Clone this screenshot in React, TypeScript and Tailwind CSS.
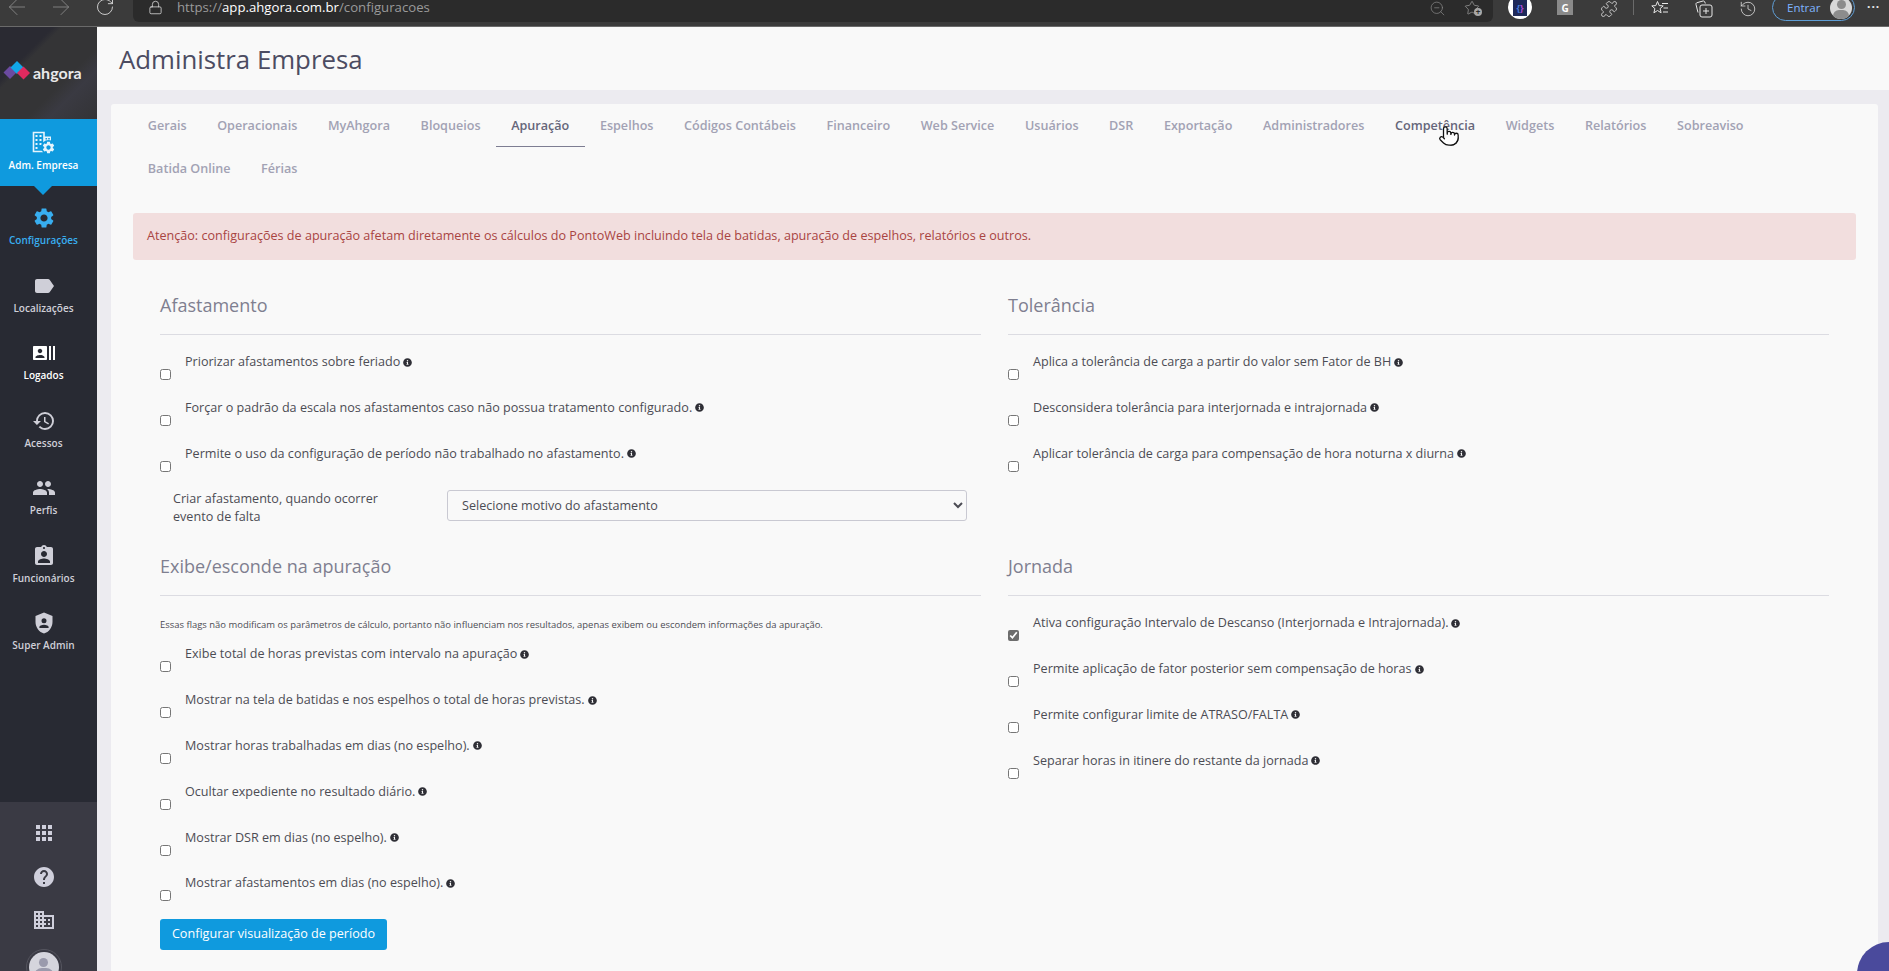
import { ArrowLeft, ArrowRight, History, Lock, Pointer, Puzzle, RotateCw, Star, ZoomOut } from "lucide-react";
import { FaInfoCircle } from "react-icons/fa";
import { MdApps, MdAssignmentInd, MdDomain, MdHelp, MdHistory, MdLabel, MdPeople, MdRecentActors, MdSettings } from "react-icons/md";
import type { ReactNode } from "react";

const GEAR =
  "M19.14 12.94c.04-.3.06-.61.06-.94 0-.32-.02-.64-.07-.94l2.03-1.58a.49.49 0 0 0 .12-.61l-1.92-3.32a.488.488 0 0 0-.59-.22l-2.39.96c-.5-.38-1.03-.7-1.62-.94l-.36-2.54a.484.484 0 0 0-.48-.41h-3.84c-.24 0-.43.17-.47.41l-.36 2.54c-.59.24-1.13.57-1.62.94l-2.39-.96c-.22-.08-.47 0-.59.22L2.74 8.87c-.12.21-.08.47.12.61l2.03 1.58c-.05.3-.09.63-.09.94s.02.64.07.94l-2.03 1.58a.49.49 0 0 0-.12.61l1.92 3.32c.12.22.37.29.59.22l2.39-.96c.5.38 1.03.7 1.62.94l.36 2.54c.05.24.24.41.48.41h3.84c.24 0 .44-.17.47-.41l.36-2.54c.59-.24 1.13-.56 1.62-.94l2.39.96c.22.08.47 0 .59-.22l1.92-3.32c.12-.22.07-.47-.12-.61l-2.01-1.58zM12 15.6c-1.98 0-3.6-1.62-3.6-3.6s1.62-3.6 3.6-3.6 3.6 1.62 3.6 3.6-1.62 3.6-3.6 3.6z";

function CompanyGearIcon() {
  return (
    <svg width="24" height="24" viewBox="0 0 24 24" className="text-[#e6f4fc]">
      <path fill="none" stroke="currentColor" strokeWidth="1.6" d="M1.5 1.5h10.5v19H1.5z" />
      <path fill="currentColor" d="M12 5.5h7v5h-7zM3.500 4h2v2h-2zM7.500 4h2v2h-2zM3.500 8h2v2h-2zM7.500 8h2v2h-2zM3.500 12h2v2h-2zM7.500 12h2v2h-2zM3.500 16h2v2h-2z" />
      <path fill="#0f9ade" d="M13.500 7h1.600v1.600h-1.600zM16.200 7h1.600v1.600h-1.600z" />
      <circle cx="16.500" cy="16.500" r="7.500" fill="#0f9ade" />
      <path fill="currentColor" transform="translate(9.300 9.300) scale(0.6)" d={GEAR} />
    </svg>
  );
}

function ShieldUserIcon() {
  return (
    <svg width="24" height="24" viewBox="0 0 24 24">
      <path
        fill="currentColor"
        fillRule="evenodd"
        d="M12 1.500 3.500 5v6c0 5.300 3.600 10.200 8.500 11.500 4.900-1.300 8.500-6.200 8.500-11.500V5zM12 7.200a2.500 2.500 0 1 1 0 5 2.500 2.500 0 0 1 0-5zm0 6.600c2.400 0 4.600 1 4.600 2.200v.9H7.400V16c0-1.200 2.200-2.200 4.600-2.200z"
      />
    </svg>
  );
}

function FavoritesIcon() {
  return (
    <svg width="18" height="18" viewBox="0 0 18 18" fill="none" stroke="#e8e8e8" strokeWidth="1">
      <path d="M6.500 1.500 8.200 5.600l4 .3-3.100 2.700 1 4.200-3.600-2.300-3.600 2.300 1-4.200L.8 5.900l4-.3z" />
      <path d="M11 3.500h6M12.500 8h4.500M12 12h5" />
    </svg>
  );
}

function CollectionsIcon() {
  return (
    <svg width="18" height="18" viewBox="0 0 18 18" fill="none" stroke="#e8e8e8" strokeWidth="1">
      <path d="M3 12.500 1 4.500c-.2-.9.2-1.600 1-1.800L8 1c.8-.2 1.500.2 1.800 1l.5 1.500" />
      <rect x="5" y="5" width="12" height="12" rx="2" />
      <path d="M11 8v6M8 11h6" />
    </svg>
  );
}

function NavItem({ icon, label, tone }: { icon: ReactNode; label: string; tone: string }) {
  return (
    <div className={`flex h-[67.5px] flex-col items-center pt-3 ${tone}`}>
      <div className="flex h-6 items-center justify-center">{icon}</div>
      <span className="mt-[3px] text-[10px] leading-[14px] font-semibold whitespace-nowrap">{label}</span>
    </div>
  );
}

function Sidebar() {
  return (
    <aside className="flex w-[97px] shrink-0 flex-col bg-[#282a33]">
      <div className="flex h-[92px] shrink-0 items-center pb-[1px] pl-[3px] bg-[linear-gradient(135deg,#2a2a32_0%,#2a2a32_28%,#343436_33%,#343436_62%,#3a3a42_74%,#333336_100%)]">
        <svg width="28" height="24" viewBox="0 0 28 24">
          <path fill="#6b4aa0" d="M7 5l6.500 6.500L7 18 .5 11.500z" />
          <path fill="#11a7e8" d="M14 0l6.500 6.500L14 13 7.500 6.500z" />
          <path fill="#e02a5f" d="M20.500 5.500l6.500 6.500-6.500 6.500L14 12z" />
        </svg>
        <span className="ml-[2px] font-['Lato',sans-serif] text-[16px] leading-none font-bold text-[#e8e8ea]">ahgora</span>
      </div>

      <div className="relative h-[67px] shrink-0 bg-[#0f9ade] pr-[10px] text-white">
        <div className="flex flex-col items-center pt-3">
          <div className="flex h-6 items-center justify-center"><CompanyGearIcon /></div>
          <span className="mt-[3px] text-[10px] leading-[14px] font-semibold whitespace-nowrap">Adm. Empresa</span>
        </div>
        <div className="absolute top-full left-[34px] h-0 w-0 border-x-[9px] border-t-[9px] border-x-transparent border-t-[#0f9ade]" />
      </div>

      <div className="mt-2 pr-[10px]">
        <NavItem icon={<MdSettings size={24} />} label="Configurações" tone="text-[#38aef0]" />
        <NavItem icon={<MdLabel size={24} />} label="Localizações" tone="text-[#cfcfd8]" />
        <NavItem icon={<MdRecentActors size={24} />} label="Logados" tone="text-white" />
        <NavItem icon={<MdHistory size={24} />} label="Acessos" tone="text-[#cfcfd8]" />
        <NavItem icon={<MdPeople size={24} />} label="Perfis" tone="text-[#cfcfd8]" />
        <NavItem icon={<MdAssignmentInd size={24} />} label="Funcionários" tone="text-[#cfcfd8]" />
        <NavItem icon={<ShieldUserIcon />} label="Super Admin" tone="text-[#cfcfd8]" />
      </div>

      <div className="mt-auto flex h-[169px] shrink-0 flex-col items-center gap-[19.500px] overflow-hidden bg-[#3a3a44] pt-[19px] pr-[10px] text-[#cfcfdc]">
        <MdApps size={24} className="shrink-0" />
        <MdHelp size={24} className="shrink-0" />
        <MdDomain size={24} className="shrink-0" />
        <div className="-mt-[3px] flex h-9 w-9 shrink-0 items-center justify-center rounded-full border border-[#55555f]">
          <div className="flex h-[30px] w-[30px] flex-col items-center overflow-hidden rounded-full bg-[#d5d5dd] pt-[6px]">
            <div className="h-[9px] w-[9px] shrink-0 rounded-full bg-[#9a9aac]" />
            <div className="mt-[1px] h-4 w-5 shrink-0 rounded-full bg-[#9a9aac]" />
          </div>
        </div>
      </div>
    </aside>
  );
}

function BrowserBar() {
  return (
    <div className="flex h-[27px] shrink-0 items-start border-b border-[#6a6a6a] bg-[#3b3b3b]">
      <ArrowLeft size={26} strokeWidth={0.8} className="-mt-[6px] ml-[4px] shrink-0 text-[#8a8a8a]" />
      <ArrowRight size={26} strokeWidth={0.8} className="-mt-[6px] ml-[18px] shrink-0 text-[#8a8a8a]" />
      <RotateCw size={20} strokeWidth={1} className="-mt-[3px] ml-[21px] shrink-0 text-[#e4e4e4]" />
      <div className="ml-[18px] flex h-[22px] w-[1360px] shrink-0 items-start rounded-br-md rounded-bl-md bg-[#2b2b2b] pr-[11px] pl-[15px]">
        <Lock size={15} strokeWidth={1.2} className="text-[#e4e4e4]" />
        <span className="ml-[14px] text-[13.2px] leading-[15px] whitespace-nowrap text-[#9a9a9a]">
          https://<span className="text-white">app.ahgora.com.br</span>/configuracoes
        </span>
        <ZoomOut size={17} strokeWidth={1} className="ml-auto text-[#8a8a8a]" />
        <span className="relative ml-[18px] h-[17px] w-[18px]">
          <Star size={16} strokeWidth={1} className="text-[#a8a8a8]" />
          <span className="absolute right-0 bottom-[1px] flex h-[8px] w-[8px] items-center justify-center rounded-full bg-[#a8a8a8] text-[8px] leading-none font-bold text-[#2b2b2b]">+</span>
        </span>
      </div>
      <div className="-mt-[5px] ml-[15px] flex h-6 w-6 shrink-0 items-center justify-center rounded-full bg-white">
        <div className="flex h-[17px] w-[14px] items-center justify-center bg-[#1f2a5a] text-[9px] leading-none font-bold">
          <span className="text-[#4a7fe0]">{"{"}</span>
          <span className="text-[#b24ad8]">{"}"}</span>
        </div>
      </div>
      <div className="ml-[25px] flex h-[15px] w-4 items-center justify-center bg-[#8a8a8a] text-[10px] leading-none font-bold text-white">G</div>
      <Puzzle size={18} strokeWidth={1} className="ml-[27px] text-[#e8e8e8]" />
      <div className="ml-[15px] h-[15px] w-px bg-[#6a6a6a]" />
      <div className="ml-[17px]"><FavoritesIcon /></div>
      <div className="ml-[26px]"><CollectionsIcon /></div>
      <History size={18} strokeWidth={1} className="ml-[26px] text-[#e8e8e8]" />
      <div className="-mt-[6px] ml-[15px] flex h-[27px] w-[83px] shrink-0 items-center rounded-full border border-[#5f9ed6] pr-[2px] pl-[14px]">
        <span className="text-[11.5px] text-[#7fb4ff]">Entrar</span>
        <div className="ml-auto flex h-[22px] w-[22px] flex-col items-center overflow-hidden rounded-full bg-[#d8d8d8] pt-[3px]">
          <div className="h-[9px] w-[9px] shrink-0 rounded-full bg-[#8c8c8c]" />
          <div className="mt-[1px] h-3 w-4 shrink-0 rounded-full bg-[#8c8c8c]" />
        </div>
      </div>
      <span className="ml-[12px] text-[12px] leading-[14px] font-bold tracking-[1px] text-[#e8e8e8]">···</span>
    </div>
  );
}

const TABS = [
  "Gerais",
  "Operacionais",
  "MyAhgora",
  "Bloqueios",
  "Apuração",
  "Espelhos",
  "Códigos Contábeis",
  "Financeiro",
  "Web Service",
  "Usuários",
  "DSR",
  "Exportação",
  "Administradores",
  "Competência",
  "Widgets",
  "Relatórios",
  "Sobreaviso",
  "Batida Online",
  "Férias",
];

function Tab({ label }: { label: string }) {
  const tone =
    label === "Apuração"
      ? "border-[#7d7d92] font-semibold text-[#66667a]"
      : label === "Competência"
        ? "border-transparent font-semibold text-[#66667a]"
        : "border-transparent font-semibold text-[#a2a2b4]";
  return (
    <div className={`flex h-[43px] items-center border-b px-[15.3px] pt-[2px] text-[12.6px] whitespace-nowrap ${tone}`}>
      {label}
    </div>
  );
}

function SectionTitle({ children }: { children: ReactNode }) {
  return (
    <div className="flex h-[42px] items-start border-b border-[#dcdce2]">
      <h3 className="text-[18px] leading-6 font-normal text-[#7f7f90]">{children}</h3>
    </div>
  );
}

function CheckRow({ label, checked }: { label: string; checked?: boolean }) {
  return (
    <div className="flex h-[45.800px] items-start">
      <input
        type="checkbox"
        defaultChecked={checked}
        className="mt-[16px] h-[11px] w-[11px] shrink-0 accent-[#6d6d6d]"
      />
      <label className="ml-[14px] flex items-center text-[12.6px] leading-[18px] text-[#4c4c54]">
        {label}
        <FaInfoCircle size={9} className="ml-[3px] text-[#2f2f36]" />
      </label>
    </div>
  );
}

function App() {
  return (
    <div className="relative flex h-[971px] w-[1889px] flex-col overflow-hidden bg-[#ecebf0] font-['Open_Sans',sans-serif]">
      <BrowserBar />
      <div className="flex min-h-0 flex-1">
        <Sidebar />
        <main className="flex min-w-0 flex-1 flex-col">
          <header className="flex h-[63px] shrink-0 items-center bg-[#f9f9f9] pt-[2px] pl-[22px]">
            <h1 className="text-[25.8px] leading-none font-normal text-[#4c4c62]">Administra Empresa</h1>
          </header>
          <section className="mt-[14px] mr-[11px] ml-[14px] flex-1 rounded-t-[3px] bg-[#f9f9f9] px-[22px]">
            <nav className="-ml-[0.5px] flex flex-wrap">
              {TABS.map((t) => (
                <Tab key={t} label={t} />
              ))}
            </nav>
            <div className="mt-[23px] flex h-[47px] items-center rounded-[3px] bg-[#f2dede] px-[14px] text-[12.6px] text-[#a94442]">
              Atenção: configurações de apuração afetam diretamente os cálculos do PontoWeb incluindo tela de batidas, apuração de espelhos, relatórios e outros.
            </div>

            <div className="mt-[33px] grid grid-cols-2 gap-x-[27px] px-[27px]">
              <div>
                <SectionTitle>Afastamento</SectionTitle>
                <div className="pt-[18px]">
                  <CheckRow label="Priorizar afastamentos sobre feriado" />
                  <CheckRow label="Forçar o padrão da escala nos afastamentos caso não possua tratamento configurado." />
                  <CheckRow label="Permite o uso da configuração de período não trabalhado no afastamento." />
                </div>
                <div className="flex h-[64px] items-start">
                  <label className="ml-[13px] w-[240px] text-[12.6px] leading-[18px] text-[#4c4c54]">
                    Criar afastamento, quando ocorrer evento de falta
                  </label>
                  <select className="mr-[14px] ml-auto h-[31px] w-[520px] rounded-[3px] border border-[#c9c9d2] pl-[10px] text-[12.6px] text-[#4c4c54]">
                    <option>Selecione motivo do afastamento</option>
                  </select>
                </div>
              </div>
              <div>
                <SectionTitle>Tolerância</SectionTitle>
                <div className="pt-[18px]">
                  <CheckRow label="Aplica a tolerância de carga a partir do valor sem Fator de BH" />
                  <CheckRow label="Desconsidera tolerância para interjornada e intrajornada" />
                  <CheckRow label="Aplicar tolerância de carga para compensação de hora noturna x diurna" />
                </div>
              </div>
              <div>
                <SectionTitle>Exibe/esconde na apuração</SectionTitle>
                <p className="mt-[22px] mb-[13px] text-[9.45px] leading-[14px] text-[#4c4c54]">
                  Essas flags não modificam os parâmetros de cálculo, portanto não influenciam nos resultados, apenas exibem ou escondem informações da apuração.
                </p>
                <CheckRow label="Exibe total de horas previstas com intervalo na apuração" />
                <CheckRow label="Mostrar na tela de batidas e nos espelhos o total de horas previstas." />
                <CheckRow label="Mostrar horas trabalhadas em dias (no espelho)." />
                <CheckRow label="Ocultar expediente no resultado diário." />
                <CheckRow label="Mostrar DSR em dias (no espelho)." />
                <CheckRow label="Mostrar afastamentos em dias (no espelho)." />
                <button className="-mt-[1px] h-[31px] w-[227px] rounded-[3px] bg-[#0f9ade] text-[12.6px] text-white">
                  Configurar visualização de período
                </button>
              </div>
              <div>
                <SectionTitle>Jornada</SectionTitle>
                <div className="pt-[18px]">
                  <CheckRow label="Ativa configuração Intervalo de Descanso (Interjornada e Intrajornada)." checked />
                  <CheckRow label="Permite aplicação de fator posterior sem compensação de horas" />
                  <CheckRow label="Permite configurar limite de ATRASO/FALTA" />
                  <CheckRow label="Separar horas in itinere do restante da jornada" />
                </div>
              </div>
            </div>
          </section>
        </main>
      </div>
      <Pointer size={22} strokeWidth={1.4} className="absolute top-[125px] left-[1438px] fill-white text-[#111]" />
      <div className="absolute top-[942px] left-[1857px] h-16 w-16 rounded-full bg-[#4a4a9c]" />
    </div>
  );
}

export default App;
